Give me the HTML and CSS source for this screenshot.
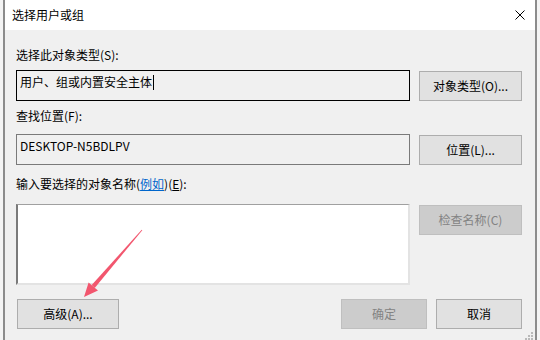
FILE: index.html
```html
<!DOCTYPE html>
<html lang="zh-CN">
<head>
<meta charset="utf-8">
<title>选择用户或组</title>
<link rel="stylesheet" href="styles.css">
</head>
<body>
<div class="window">
  <div class="titlebar">
    <span class="title">选择用户或组</span>
    <svg class="close" width="10" height="10" viewBox="0 0 10 10"><path d="M0.5 0.5 L9.5 9.5 M9.5 0.5 L0.5 9.5" stroke="#000" stroke-width="1" fill="none"/></svg>
  </div>
  <div class="content">
    <div class="label l1">选择此对象类型(S):</div>
    <div class="row r1">
      <div class="field focused">用户、组或内置安全主体<span class="caret"></span></div>
      <button class="btn side">对象类型(O)...</button>
    </div>
    <div class="label l2">查找位置(F):</div>
    <div class="row r2">
      <div class="field">DESKTOP-N5BDLPV</div>
      <button class="btn side">位置(L)...</button>
    </div>
    <div class="label l3">输入要选择的对象名称(<a class="link">例如</a>)(<u>E</u>):</div>
    <div class="row r3">
      <div class="area"></div>
      <button class="btn side disabled">检查名称(C)</button>
    </div>
    <div class="bottom">
      <button class="btn adv">高级(A)...</button>
      <div class="actions">
        <button class="btn small disabled">确定</button>
        <button class="btn small">取消</button>
      </div>
    </div>
  </div>
  <div class="grip">
    <i class="d d1"></i><i class="d d2"></i><i class="d d3"></i><i class="d d4"></i><i class="d d5"></i><i class="d d6"></i>
  </div>
  <svg class="arrow" width="540" height="340" viewBox="0 0 540 340">
    <polygon points="94.7,287.9 91.7,285.1 141.7,229.7 142.3,230.3" fill="#f2566e"/>
    <polygon points="84,297 88.6,282.4 93.2,286.4 98.0,290.4" fill="#f2566e"/>
  </svg>
</div>
</body>
</html>
```

FILE: styles.css
```css
html, body {
  margin: 0;
  padding: 0;
  background: #f4f4f4;
}
body {
  width: 540px;
  height: 340px;
  overflow: hidden;
  font-family: "Noto Sans CJK SC", "Noto Sans", sans-serif;
  font-size: 12px;
  color: #000;
}
.window {
  position: relative;
  margin-left: 3px;
  width: 530px;
  height: 340px;
  border-left: 2px solid #8c8c8c;
  border-right: 2px solid #8c8c8c;
  background: #f0f0f0;
  display: flex;
  flex-direction: column;
}
.titlebar {
  height: 30px;
  background: #fff;
  display: flex;
  align-items: center;
  justify-content: space-between;
  padding: 0 10px 0 7px;
  flex: none;
}
.title {
  font-size: 12px;
  line-height: 16px;
}
.close {
  display: block;
}
.content {
  padding: 0 13px 0 11px;
  display: flex;
  flex-direction: column;
}
.label {
  line-height: 16px;
  height: 16px;
  white-space: nowrap;
}
.l1 { margin-top: 17px; }
.l2 { margin-top: 7px; }
.l3 { margin-top: 11px; }
.link {
  color: #0066cc;
  text-decoration: underline;
}
.row {
  display: flex;
  gap: 9px;
  align-items: flex-start;
}
.r1 { margin-top: 7px; }
.r2 { margin-top: 10px; }
.r3 { margin-top: 12px; }
.field {
  box-sizing: border-box;
  width: 394px;
  height: 31px;
  border: 1px solid #7a7a7a;
  padding: 3px 3px 0;
  line-height: 16px;
  white-space: nowrap;
  background: #f0f0f0;
}
.field.focused {
  border-color: #000;
}
.caret {
  display: inline-block;
  width: 0;
  height: 15px;
  border-left: 1px solid #000;
  vertical-align: -3px;
  margin-left: 1px;
}
.area {
  box-sizing: border-box;
  width: 394px;
  height: 81px;
  background: #fff;
  border-top: 1px solid #a0a0a0;
  border-left: 2px solid #7a7a7a;
  border-right: 2px solid #e3e3e3;
  border-bottom: 2px solid #e3e3e3;
}
.btn {
  box-sizing: border-box;
  font-family: inherit;
  font-size: 12px;
  line-height: 16px;
  color: #000;
  background: #e1e1e1;
  border: 1px solid #adadad;
  border-radius: 0;
  padding: 0;
  margin: 0;
  height: 30px;
  white-space: nowrap;
}
.btn.disabled {
  background: #cccccc;
  border-color: #bfbfbf;
  color: #838383;
}
.side {
  width: 103px;
  margin-top: 1px;
}
.bottom {
  margin-top: 14px;
  display: flex;
  justify-content: space-between;
  padding-left: 1px;
}
.adv {
  width: 102px;
}
.actions {
  display: flex;
  gap: 9px;
}
.small {
  width: 86px;
}
.grip {
  position: absolute;
  right: 2px;
  bottom: 0;
  width: 10px;
  height: 10px;
}
.d {
  position: absolute;
  width: 2px;
  height: 2px;
  background: #b9b9b9;
}
.d1 { right: 0; bottom: 0; }
.d2 { right: 3px; bottom: 0; }
.d3 { right: 6px; bottom: 0; }
.d4 { right: 0; bottom: 3px; }
.d5 { right: 3px; bottom: 3px; }
.d6 { right: 0; bottom: 6px; }
.arrow {
  position: absolute;
  left: -5px;
  top: 0;
  pointer-events: none;
}
```
